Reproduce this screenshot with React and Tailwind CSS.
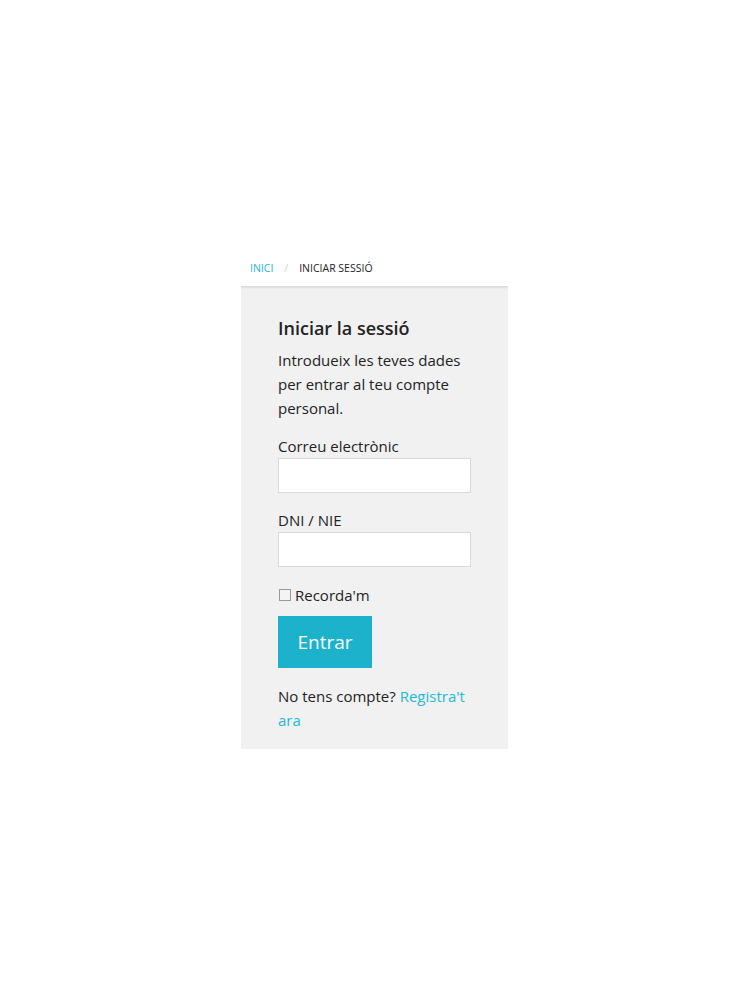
import React from 'react';

const App = () => {
    return (
        <div className="min-h-[1000px] bg-white pt-[259px]" style={{ fontFamily: '"Open Sans", "Noto Sans", sans-serif' }}>
            <div className="w-[267px] ml-[241px] flex flex-col">
                {/* Breadcrumb */}
                <nav className="h-[27px] flex items-start pl-[9px] pt-[2px] text-[10.5px] uppercase">
                    <span className="text-[#24b9d7]">Inici</span>
                    <span className="text-[#cfcfcf] mx-[11px]">/</span>
                    <span className="text-[#232323] font-medium">Iniciar sessió</span>
                </nav>

                {/* Login panel */}
                <section className="bg-[#f1f1f2] shadow-[inset_0_3px_3px_-2px_rgba(0,0,0,0.15)] px-[37px] pt-[28px] pb-[17px] text-[#232323]">
                    <h1 className="text-[18px] font-semibold leading-[28px] mb-[6px]">Iniciar la sessió</h1>
                    <p className="text-[15px] leading-[24px] mb-[14px]">
                        Introdueix les teves dades per entrar al teu compte personal.
                    </p>

                    <form className="flex flex-col" onSubmit={e => e.preventDefault()}>
                        <label className="text-[15px] leading-[24px]">Correu electrònic</label>
                        <input type="email" className="w-[193px] h-[35px] bg-white border border-[#d9d9d9] outline-none mb-[16px]" />

                        <label className="text-[15px] leading-[23px]">DNI / NIE</label>
                        <input type="text" className="w-[193px] h-[35px] bg-white border border-[#d9d9d9] outline-none mb-[16px]" />

                        <label className="flex items-center text-[15px] leading-[24px] mb-[9px]">
                            <input type="checkbox" className="w-[12px] h-[12px] mr-[4px] ml-[1px] m-0 border border-[#9a9a9a] bg-[#f4f4f4] appearance-none" />
                            <span>Recorda'm</span>
                        </label>

                        <button type="submit" className="w-[94px] h-[52px] bg-[#1cb2cc] text-white text-[19px] leading-none mb-[16px]">
                            Entrar
                        </button>
                    </form>

                    <p className="text-[15px] leading-[24px] w-[193px]">
                        No tens compte? <a href="#" className="text-[#24b9d7]">Registra't ara</a>
                    </p>
                </section>
            </div>
        </div>
    );
};

export default App;
